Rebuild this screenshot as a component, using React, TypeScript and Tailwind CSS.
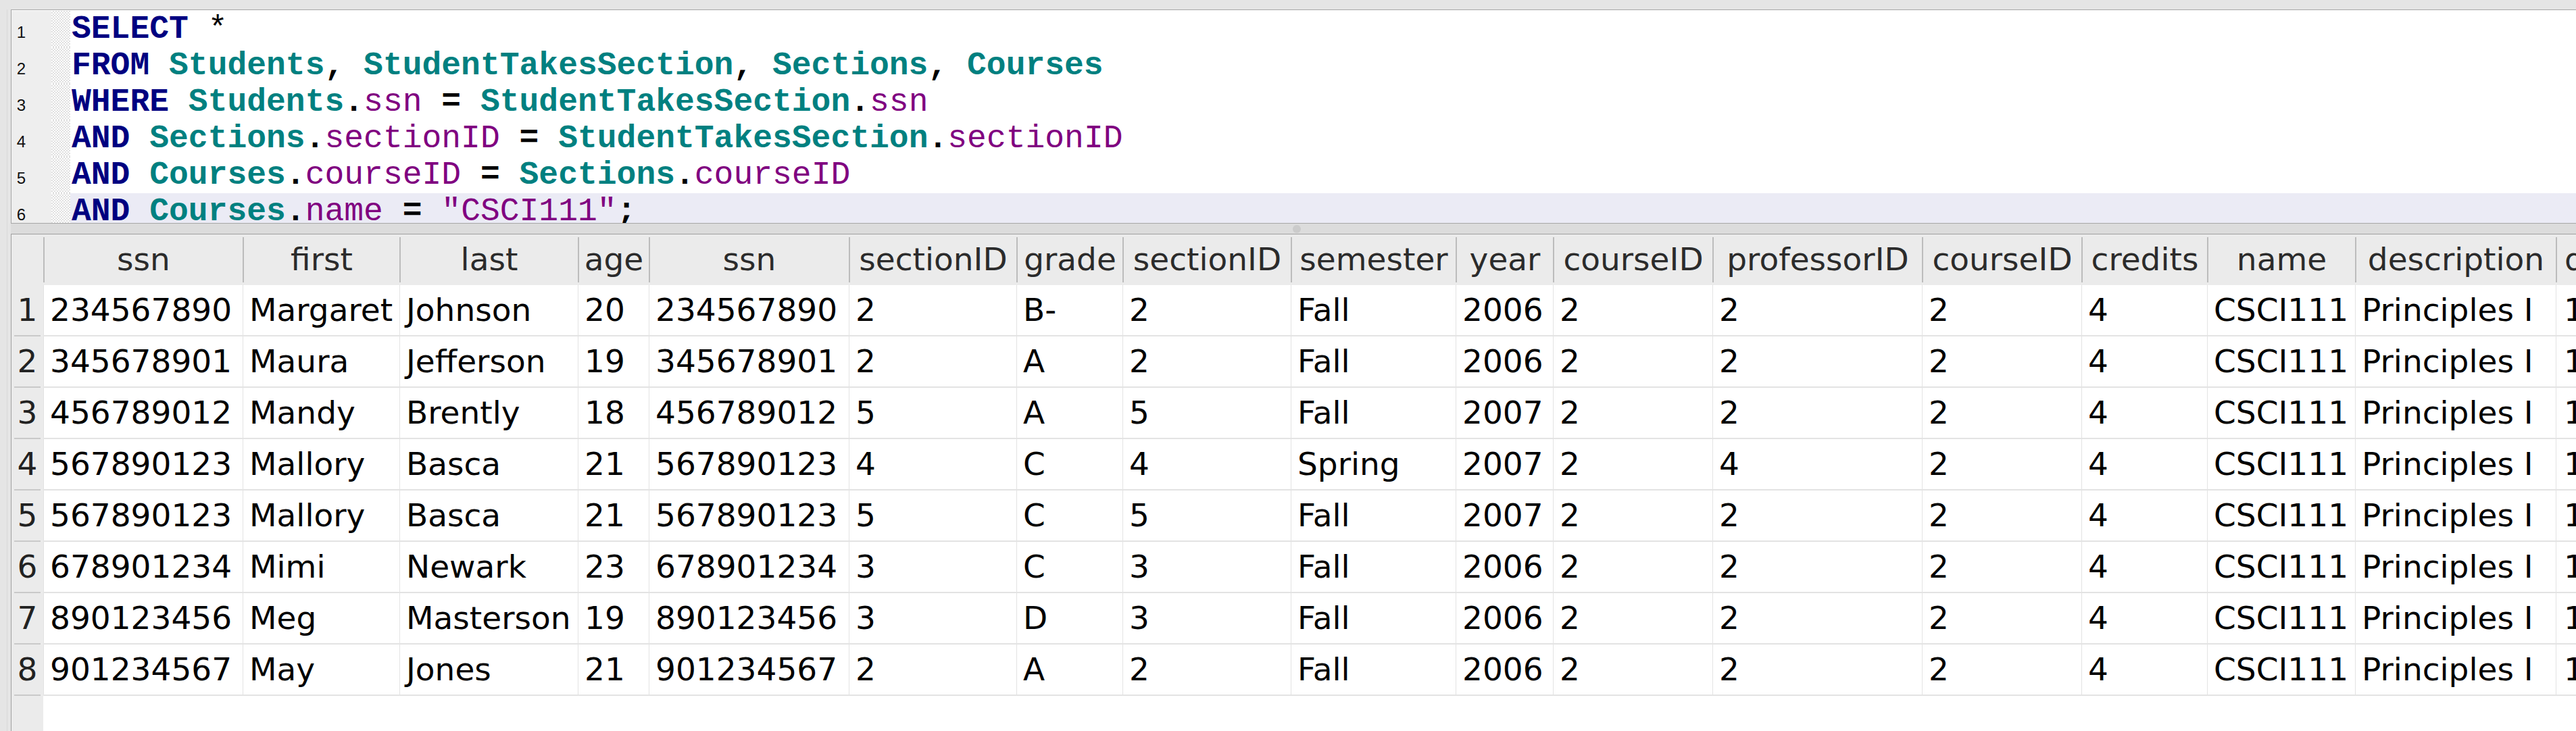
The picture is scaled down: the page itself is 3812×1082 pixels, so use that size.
import React from "react";

type Seg = { t: string; k: "kw" | "tb" | "col" | "str" | "p" | "pn" };

const lines: Seg[][] = [
  [{ t: "SELECT", k: "kw" }, { t: " *", k: "pn" }],
  [
    { t: "FROM", k: "kw" }, { t: " ", k: "p" }, { t: "Students", k: "tb" }, { t: ", ", k: "p" },
    { t: "StudentTakesSection", k: "tb" }, { t: ", ", k: "p" }, { t: "Sections", k: "tb" }, { t: ", ", k: "p" },
    { t: "Courses", k: "tb" },
  ],
  [
    { t: "WHERE", k: "kw" }, { t: " ", k: "p" }, { t: "Students", k: "tb" }, { t: ".", k: "p" }, { t: "ssn", k: "col" },
    { t: " = ", k: "p" }, { t: "StudentTakesSection", k: "tb" }, { t: ".", k: "p" }, { t: "ssn", k: "col" },
  ],
  [
    { t: "AND", k: "kw" }, { t: " ", k: "p" }, { t: "Sections", k: "tb" }, { t: ".", k: "p" }, { t: "sectionID", k: "col" },
    { t: " = ", k: "p" }, { t: "StudentTakesSection", k: "tb" }, { t: ".", k: "p" }, { t: "sectionID", k: "col" },
  ],
  [
    { t: "AND", k: "kw" }, { t: " ", k: "p" }, { t: "Courses", k: "tb" }, { t: ".", k: "p" }, { t: "courseID", k: "col" },
    { t: " = ", k: "p" }, { t: "Sections", k: "tb" }, { t: ".", k: "p" }, { t: "courseID", k: "col" },
  ],
  [
    { t: "AND", k: "kw" }, { t: " ", k: "p" }, { t: "Courses", k: "tb" }, { t: ".", k: "p" }, { t: "name", k: "col" },
    { t: " = ", k: "p" }, { t: "\"CSCI111\"", k: "str" }, { t: ";", k: "p" },
  ],
];

const segClass: Record<Seg["k"], string> = {
  kw: "text-[#000080] font-bold",
  tb: "text-[#008080] font-bold",
  col: "text-[#800080] font-normal",
  str: "text-[#800080] font-normal",
  p: "text-black font-bold",
  pn: "text-black font-normal",
};

const headers = [
  "ssn", "first", "last", "age", "ssn", "sectionID", "grade", "sectionID", "semester", "year",
  "courseID", "professorID", "courseID", "credits", "name", "description",
];

const rows: string[][] = [
  ["234567890", "Margaret", "Johnson", "20", "234567890", "2", "B-", "2", "Fall", "2006", "2", "2", "2", "4", "CSCI111", "Principles I", "1"],
  ["345678901", "Maura", "Jefferson", "19", "345678901", "2", "A", "2", "Fall", "2006", "2", "2", "2", "4", "CSCI111", "Principles I", "1"],
  ["456789012", "Mandy", "Brently", "18", "456789012", "5", "A", "5", "Fall", "2007", "2", "2", "2", "4", "CSCI111", "Principles I", "1"],
  ["567890123", "Mallory", "Basca", "21", "567890123", "4", "C", "4", "Spring", "2007", "2", "4", "2", "4", "CSCI111", "Principles I", "1"],
  ["567890123", "Mallory", "Basca", "21", "567890123", "5", "C", "5", "Fall", "2007", "2", "2", "2", "4", "CSCI111", "Principles I", "1"],
  ["678901234", "Mimi", "Newark", "23", "678901234", "3", "C", "3", "Fall", "2006", "2", "2", "2", "4", "CSCI111", "Principles I", "1"],
  ["890123456", "Meg", "Masterson", "19", "890123456", "3", "D", "3", "Fall", "2006", "2", "2", "2", "4", "CSCI111", "Principles I", "1"],
  ["901234567", "May", "Jones", "21", "901234567", "2", "A", "2", "Fall", "2006", "2", "2", "2", "4", "CSCI111", "Principles I", "1"],
];

function CodeLine({ n, segs, hl }: { n: number; segs: Seg[]; hl: boolean }) {
  return (
    <div className="flex h-[54px] shrink-0">
      <div className="w-[59px] shrink-0 bg-[#eeeeee] text-right pr-[38px] pt-[10px] leading-[44px] text-[24px] text-[#111] font-['Liberation_Sans',Arial,sans-serif]">
        {n}
      </div>
      <div className="w-[28px] shrink-0 bg-[image:repeating-conic-gradient(#e0e0e0_0%_25%,#ffffff_0%_50%)] bg-[length:4px_4px]" />
      <div
        className={
          hl
            ? "flex-1 pl-[2px] bg-[#ebebf5] whitespace-pre text-[48px] leading-[54px] font-['Liberation_Mono','Courier_New',monospace]"
            : "flex-1 pl-[2px] bg-white whitespace-pre text-[48px] leading-[54px] font-['Liberation_Mono','Courier_New',monospace]"
        }
      >
        {segs.map((s, i) => (
          <span key={i} className={segClass[s.k]}>
            {s.t}
          </span>
        ))}
      </div>
    </div>
  );
}

export default function App() {
  return (
    <div className="flex w-[3812px] h-[1082px] overflow-hidden bg-[#e5e5e5] font-['DejaVu_Sans',Verdana,sans-serif]">
      {/* left strip */}
      <div className="w-[16px] shrink-0 pt-[14px] pl-[10px]">
        <div className="w-px h-full bg-[#d9d9d9]" />
      </div>

      <div className="flex-1 min-w-0 flex flex-col pt-[14px]">
        {/* SQL editor */}
        <div className="h-[317px] shrink-0 border-t border-b border-l border-[#a6a6a6] overflow-hidden flex flex-col pt-[1px] bg-white">
          {lines.map((segs, i) => (
            <CodeLine key={i} n={i + 1} segs={segs} hl={i === 5} />
          ))}
        </div>

        {/* splitter */}
        <div className="h-[15px] shrink-0 bg-[#dcdcdc] flex items-center justify-center">
          <div className="w-[12px] h-[12px] rounded-full bg-[#cbcbcb] ml-[10px]" />
        </div>

        {/* results table */}
        <div className="flex-1 min-h-0 border-t border-l border-[#a0a0a0] overflow-hidden bg-white">
          <div className="grid w-max h-full grid-cols-[47px_295px_232px_264px_105px_296px_248px_157px_249px_244px_144px_236px_310px_236px_186px_219px_297px_320px] grid-rows-[75px_repeat(8,76px)_1fr] text-[47px]">
            {/* header */}
            <div className="bg-[#ebebeb]" />
            {headers.map((h, i) => (
              <div key={"h" + i} className="flex bg-[#ebebeb]">
                <div className="w-[2px] shrink-0 my-[4px] bg-[#bcbcbc]" />
                <div className="flex-1 flex items-center justify-center whitespace-nowrap text-[#2b2b2b]">{h}</div>
              </div>
            ))}
            <div className="flex bg-[#ebebeb]">
              <div className="w-[2px] shrink-0 my-[4px] bg-[#bcbcbc]" />
              <div className="flex-1 flex items-center pl-[11px] whitespace-nowrap text-[#2b2b2b]">department</div>
            </div>

            {/* rows */}
            {rows.map((r, ri) => (
              <React.Fragment key={"r" + ri}>
                <div className="flex flex-col bg-[#ebebeb]">
                  <div className="flex-1 flex items-center justify-center text-[#222]">{ri + 1}</div>
                  <div className="h-[2px] mx-[4px] bg-[#c9c9c9]" />
                </div>
                {r.map((v, ci) => (
                  <div key={"c" + ci} className="flex bg-white border-b-2 border-[#e3e3e3]">
                    <div className="w-px shrink-0 bg-[#e3e3e3]" />
                    <div
                      className={
                        ci === r.length - 1
                          ? "flex-1 flex items-center pl-[11px] whitespace-nowrap text-black"
                          : "flex-1 flex items-center pl-[9px] whitespace-nowrap text-black"
                      }
                    >
                      {v}
                    </div>
                  </div>
                ))}
              </React.Fragment>
            ))}

            {/* filler */}
            <div className="bg-[#ebebeb]" />
            <div className="col-span-17 bg-white" />
          </div>
        </div>
      </div>
    </div>
  );
}
